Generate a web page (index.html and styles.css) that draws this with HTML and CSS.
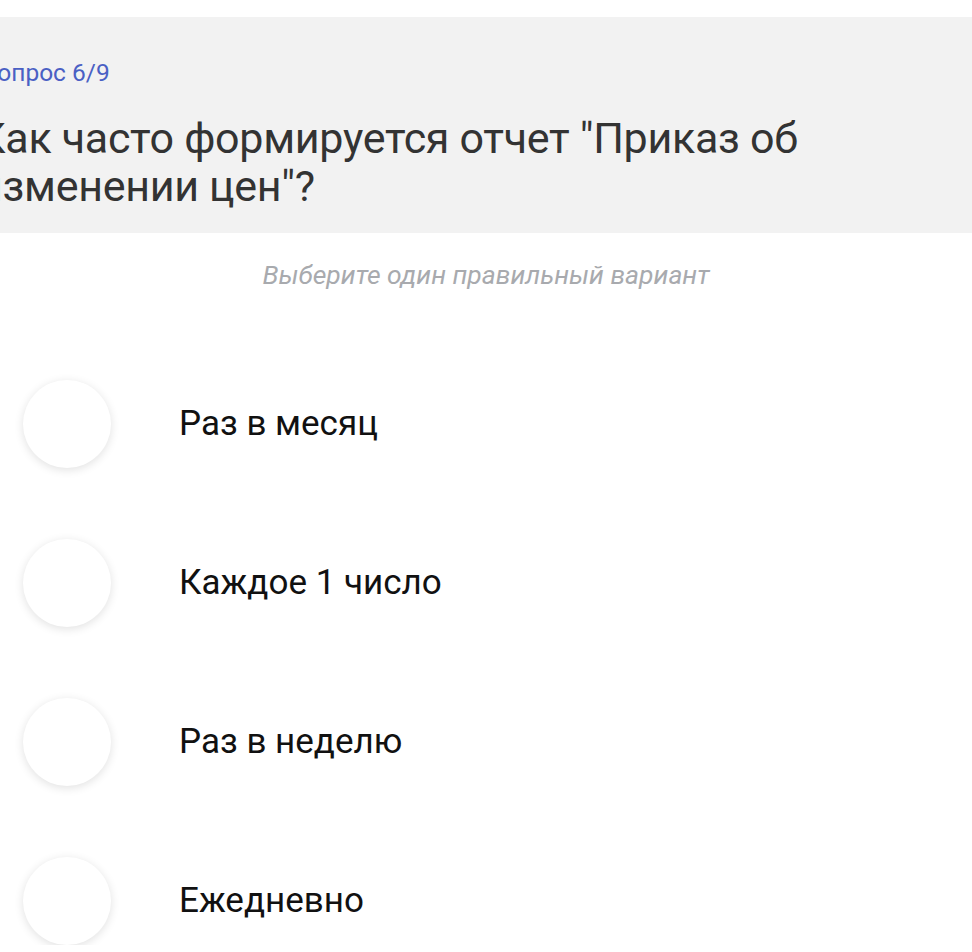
FILE: index.html
```html
<!DOCTYPE html>
<html lang="ru">
<head>
<meta charset="utf-8">
<title>Вопрос 6/9</title>
<link rel="stylesheet" href="styles.css">
</head>
<body>
<main class="quiz">
  <header class="question">
    <div class="question-counter">Вопрос 6/9</div>
    <h1 class="question-title">Как часто формируется отчет "Приказ об изменении цен"?</h1>
  </header>
  <p class="hint">Выберите один правильный вариант</p>
  <ul class="options">
    <li class="option"><span class="radio"></span><span class="option-label">Раз в месяц</span></li>
    <li class="option"><span class="radio"></span><span class="option-label">Каждое 1 число</span></li>
    <li class="option"><span class="radio"></span><span class="option-label">Раз в неделю</span></li>
    <li class="option"><span class="radio"></span><span class="option-label">Ежедневно</span></li>
  </ul>
</main>
</body>
</html>
```
FILE: styles.css
```css
html, body {
  margin: 0;
  padding: 0;
  background: #ffffff;
}

body {
  font-family: Roboto, "Noto Sans", sans-serif;
  overflow: hidden;
}

.quiz {
  width: 972px;
}

.question {
  margin: 17px 0 0 -22px;
  padding: 42px 20px 23px 0;
  background: #f2f2f2;
}

.question-counter {
  font-size: 24.5px;
  line-height: 28px;
  color: #4a60c4;
  margin-left: 4px;
}

.question-title {
  margin: 27px 0 0 0;
  font-size: 43px;
  line-height: 48px;
  letter-spacing: -0.3px;
  font-weight: 400;
  color: #333333;
}

.hint {
  margin: 26px 0 0 0;
  text-align: center;
  font-size: 26.5px;
  line-height: 32px;
  font-style: italic;
  color: #a8aaae;
}

.options {
  list-style: none;
  margin: 89px 0 0 0;
  padding: 0 0 0 23px;
  display: flex;
  flex-direction: column;
  gap: 71px;
}

.option {
  display: flex;
  align-items: center;
  gap: 68px;
  height: 88px;
}

.radio {
  flex: none;
  width: 88px;
  height: 88px;
  border-radius: 50%;
  background: #ffffff;
  box-shadow: 0 2px 10px rgba(0, 0, 0, 0.12);
}

.option-label {
  font-size: 35px;
  line-height: 40px;
  color: #111111;
}
```
